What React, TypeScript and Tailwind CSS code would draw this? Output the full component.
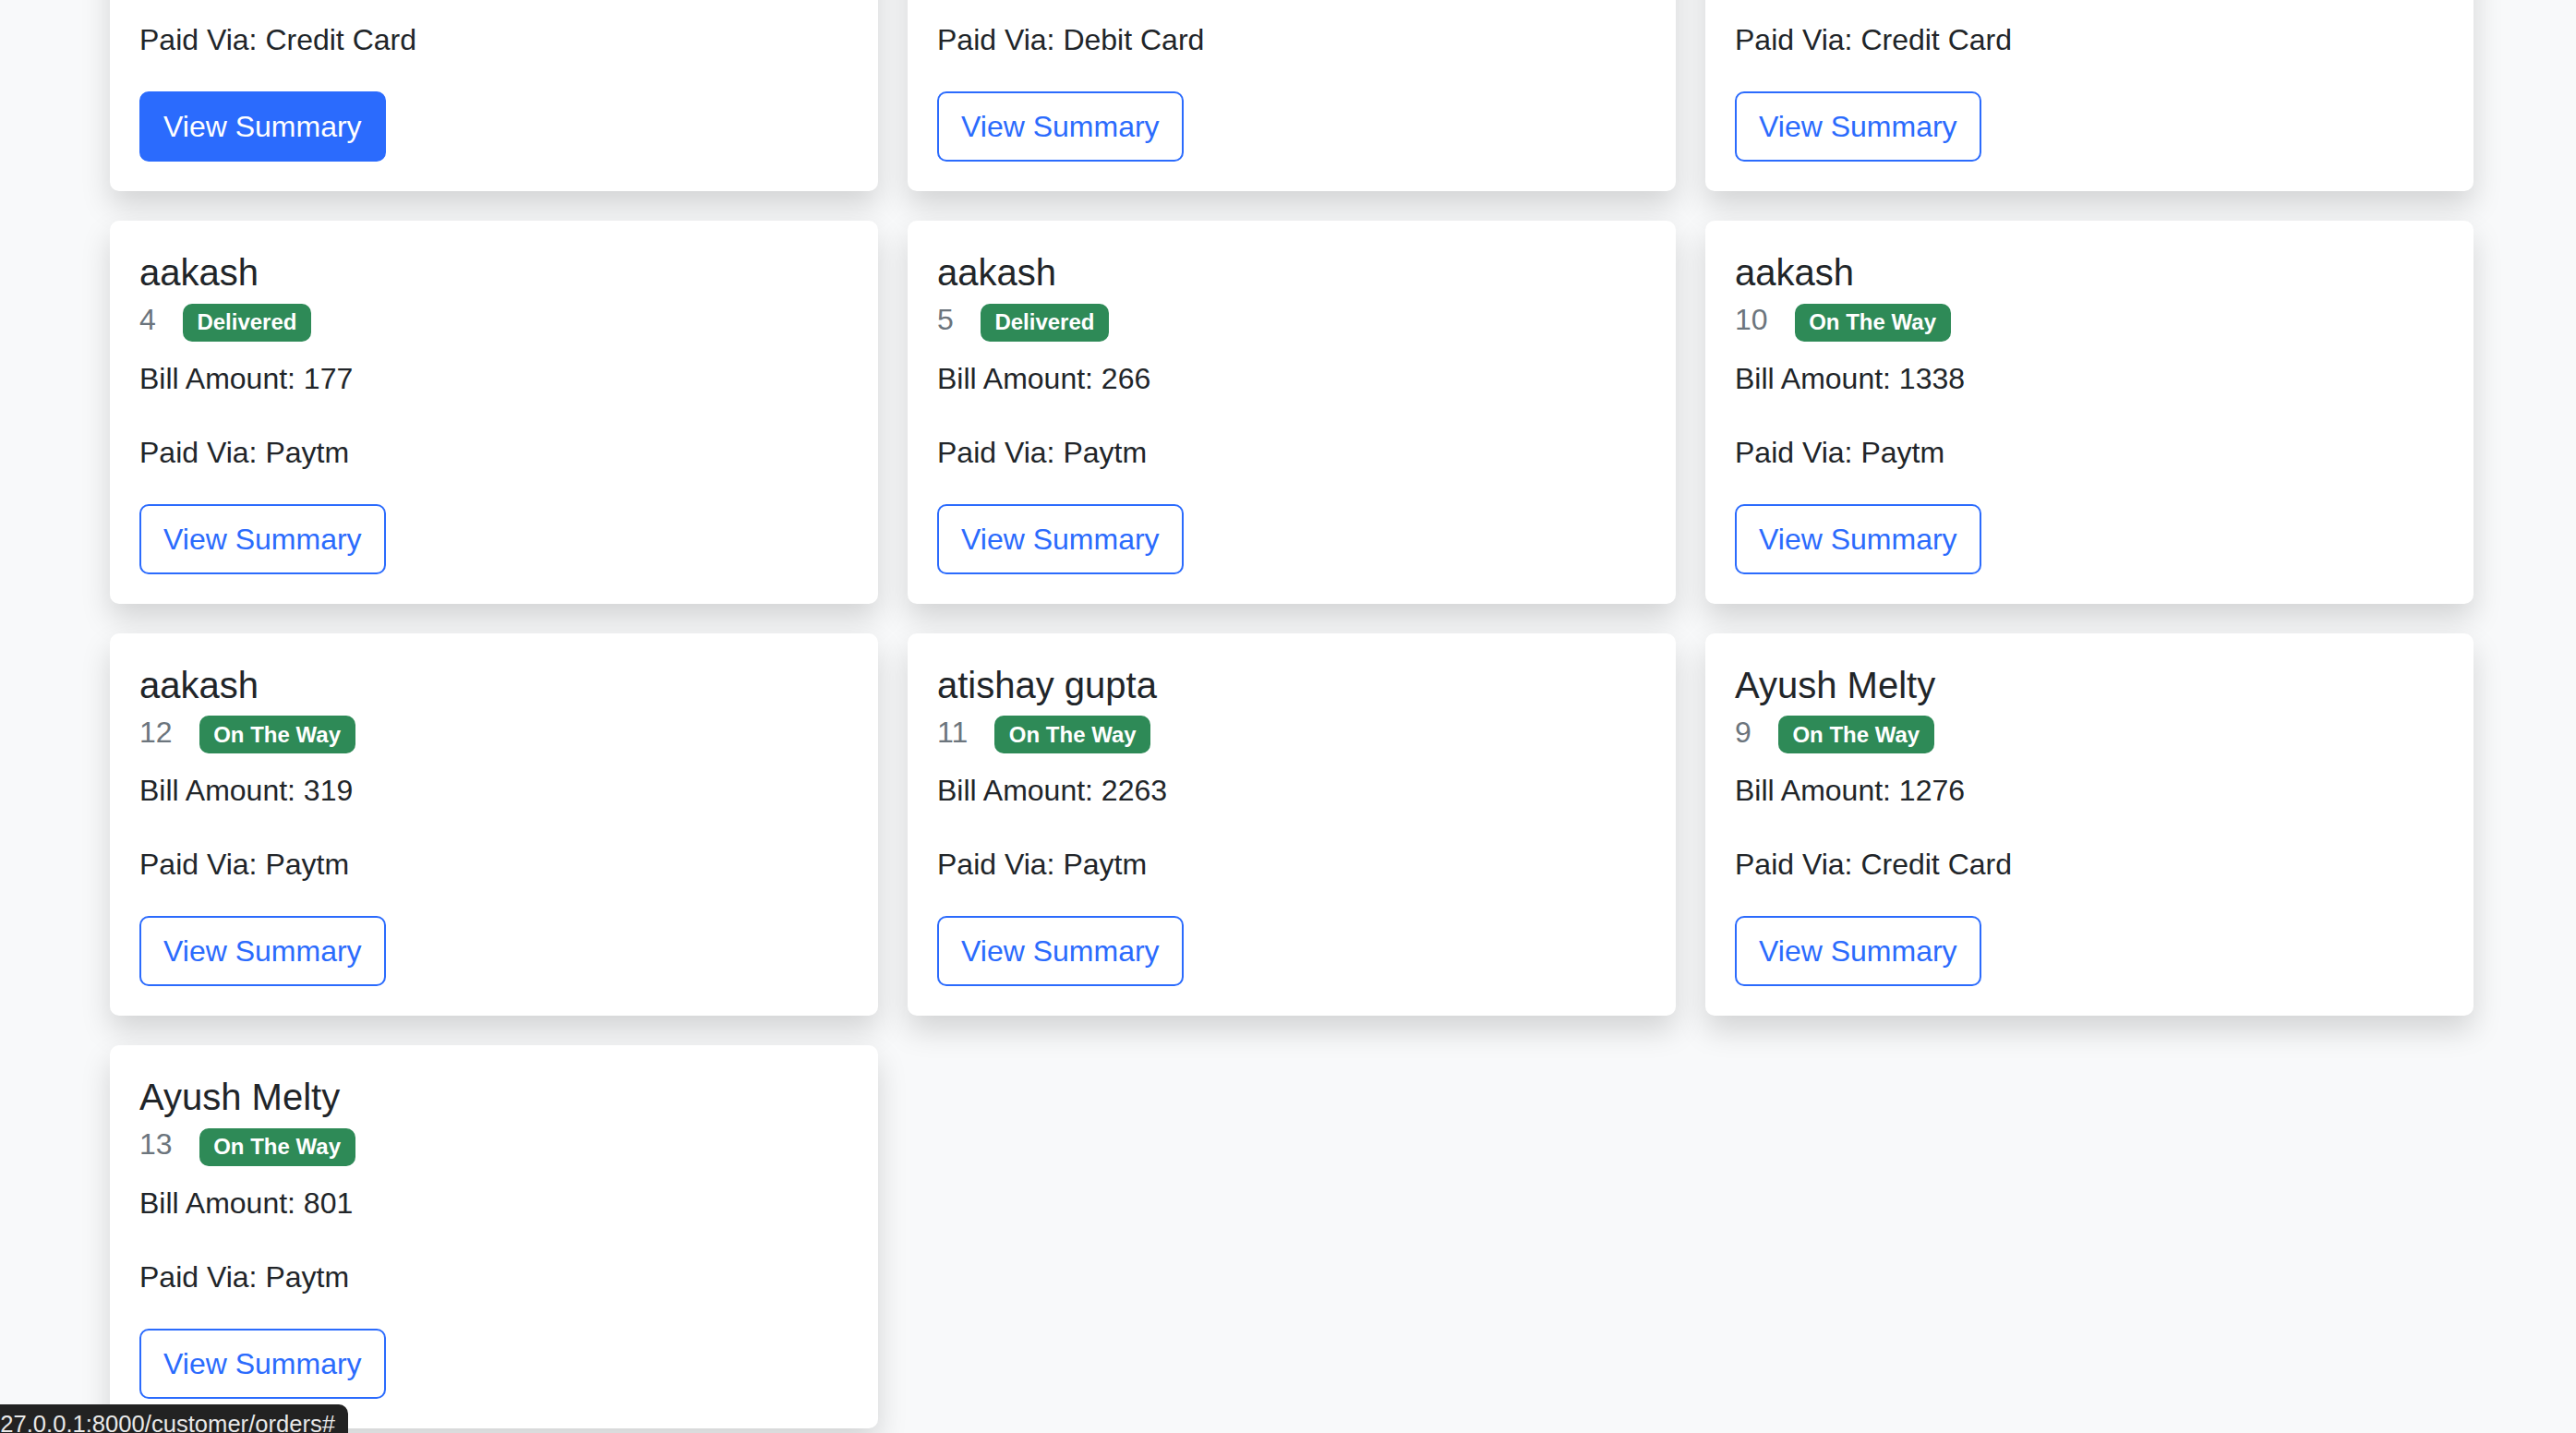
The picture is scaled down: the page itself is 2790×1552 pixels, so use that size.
type Order = {
  name: string;
  id: number;
  status: string;
  bill: number;
  paidVia: string;
  active?: boolean;
};

const orders: Order[] = [
  { name: "aakash", id: 1, status: "Delivered", bill: 540, paidVia: "Credit Card", active: true },
  { name: "aakash", id: 2, status: "Delivered", bill: 312, paidVia: "Debit Card" },
  { name: "aakash", id: 3, status: "Delivered", bill: 925, paidVia: "Credit Card" },
  { name: "aakash", id: 4, status: "Delivered", bill: 177, paidVia: "Paytm" },
  { name: "aakash", id: 5, status: "Delivered", bill: 266, paidVia: "Paytm" },
  { name: "aakash", id: 10, status: "On The Way", bill: 1338, paidVia: "Paytm" },
  { name: "aakash", id: 12, status: "On The Way", bill: 319, paidVia: "Paytm" },
  { name: "atishay gupta", id: 11, status: "On The Way", bill: 2263, paidVia: "Paytm" },
  { name: "Ayush Melty", id: 9, status: "On The Way", bill: 1276, paidVia: "Credit Card" },
  { name: "Ayush Melty", id: 13, status: "On The Way", bill: 801, paidVia: "Paytm" },
];

function OrderCard({ order }: { order: Order }) {
  return (
    <div className="bg-white rounded-[10px] shadow-[0_16px_32px_rgba(0,0,0,0.15)] p-[32px]">
      <h5 className="text-[40px] leading-[1.2] font-medium mb-[16px]">{order.name}</h5>
      <h6 className="text-[32px] leading-[1.2] font-medium text-[#6c757d] -mt-[8px] mb-[16px]">
        {order.id}
        <span className="inline-block align-baseline ml-[29px] px-[15.6px] py-[8.4px] text-[24px] leading-none font-bold text-white bg-[#2e8a57] rounded-[10px]">
          {order.status}
        </span>
      </h6>
      <p className="text-[32px] leading-[1.5] mb-[32px]">Bill Amount: {order.bill}</p>
      <p className="text-[32px] leading-[1.5] mb-[32px]">Paid Via: {order.paidVia}</p>
      <a
        href="#"
        className={
          order.active
            ? "block w-fit border-2 border-[#2b6bfd] bg-[#2b6bfd] text-white px-[24px] py-[12px] text-[32px] leading-[1.5] rounded-[10px]"
            : "block w-fit border-2 border-[#2b6bfd] bg-white text-[#2b6bfd] px-[24px] py-[12px] text-[32px] leading-[1.5] rounded-[10px]"
        }
      >
        View Summary
      </a>
    </div>
  );
}

export default function App() {
  return (
    <div className="min-h-screen bg-[#f8f9fa] text-[#212529] font-['Liberation_Sans',Arial,sans-serif] overflow-hidden">
      <div className="pl-[119px] -mt-[207px] pb-[64px]">
        <div className="grid grid-cols-3 gap-[32px] w-[2560px]">
          {orders.map((o) => (
            <OrderCard key={o.id} order={o} />
          ))}
        </div>
      </div>
      <div className="fixed left-[-20px] top-[1521px] bg-[#222222] text-[#e8e8e8] text-[25.6px] leading-[36px] pl-[6px] pr-[14px] pt-[3px] pb-[4px] rounded-tr-[10px]">
        127.0.0.1:8000/customer/orders#
      </div>
    </div>
  );
}
